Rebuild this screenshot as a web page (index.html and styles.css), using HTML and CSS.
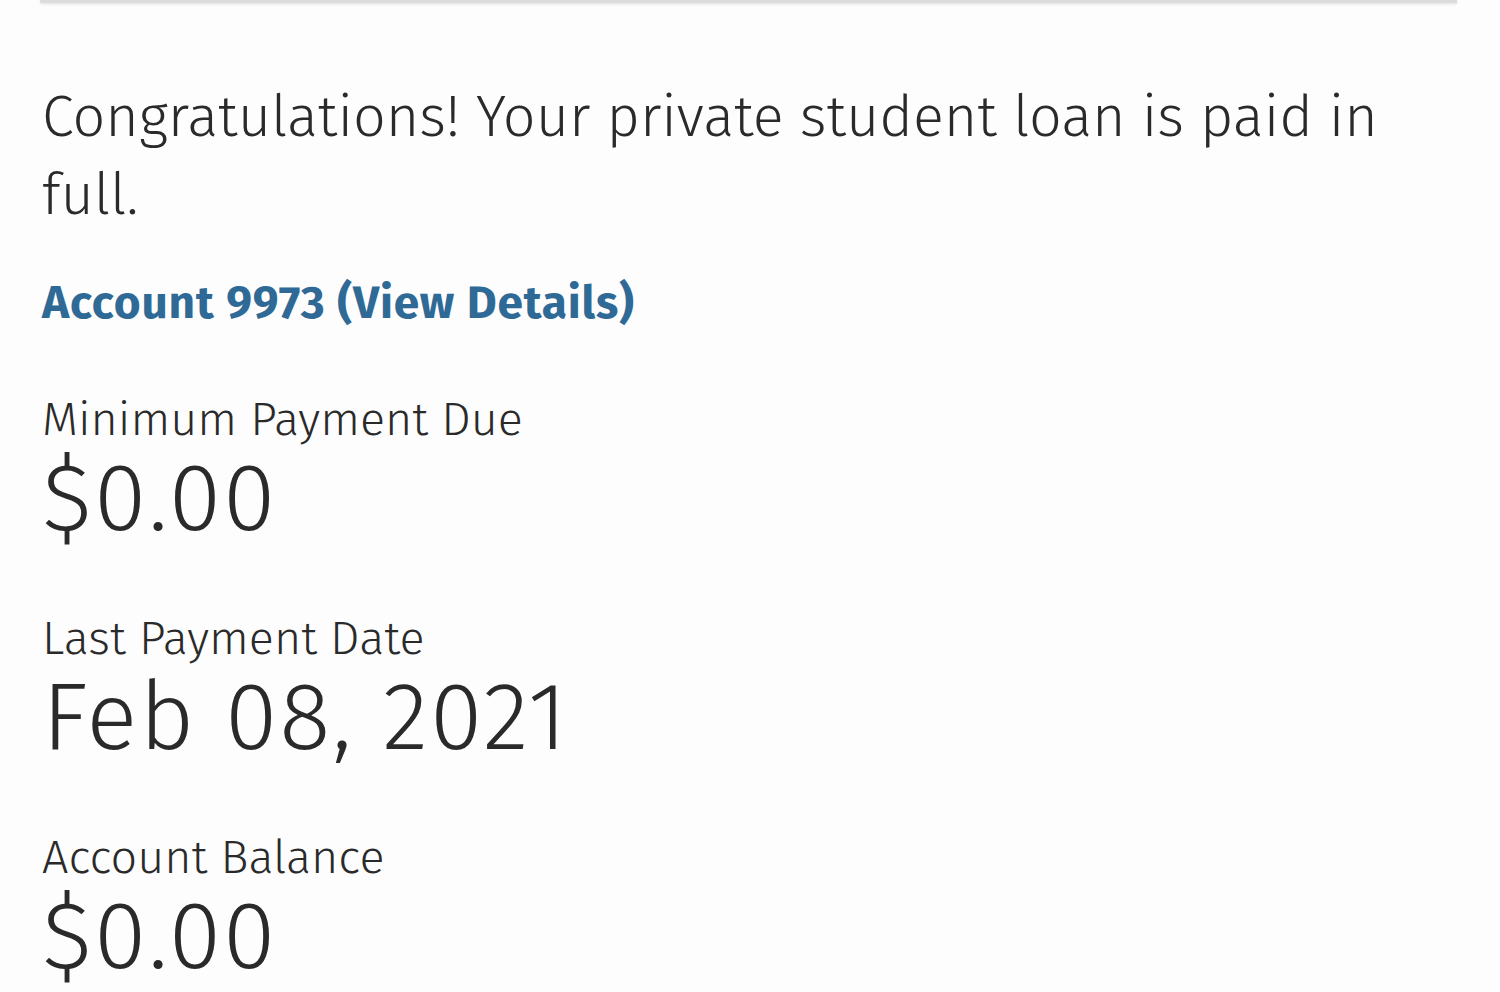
FILE: index.html
```html
<!DOCTYPE html>
<html lang="en">
<head>
    <meta charset="UTF-8">
    <meta name="viewport" content="width=device-width, initial-scale=1.0">
    <title>Loan Summary</title>
    <link rel="stylesheet" href="styles.css">
</head>
<body>

<!-- top edge of the card above -->
<div class="top-rule"></div>

<div class="summary">
    <p class="notice">Congratulations! Your private student loan is paid in full.</p>

    <a class="account-link" href="#">Account 9973 (View Details)</a>

    <div class="field">
        <div class="field-label">Minimum Payment Due</div>
        <div class="field-value">$0.00</div>
    </div>

    <div class="field">
        <div class="field-label">Last Payment Date</div>
        <div class="field-value">Feb 08, 2021</div>
    </div>

    <div class="field">
        <div class="field-label">Account Balance</div>
        <div class="field-value">$0.00</div>
    </div>
</div>

</body>
</html>
```

FILE: styles.css
```css
:root {
    --text: #2a2a2a;
    --link: #2f6a96;
    --rule: #dcdcdc;
}

body {
    margin: 0;
    background: #fdfdfd;
    color: var(--text);
    font-family: 'Fira Sans', 'Open Sans', 'Liberation Sans', sans-serif;
    font-weight: 300;
    overflow: hidden;
}

.top-rule {
    height: 3px;
    margin: 0 43px 0 40px;
    background: var(--rule);
    box-shadow: 0 1px 3px rgba(0,0,0,0.12);
}

.summary {
    padding: 0 42px;
}

.notice {
    font-size: 57.5px;
    line-height: 78px;
    margin: 75px 0 0;
}

.account-link {
    display: block;
    margin-top: 41px;
    font-size: 46px;
    font-weight: 700;
    line-height: 56px;
    letter-spacing: 0.8px;
    color: var(--link);
    text-decoration: none;
}

.field {
    margin-top: 60px;
}

.field-label {
    font-size: 46.7px;
    line-height: 56px;
}

.field-value {
    font-size: 95px;
    line-height: 104px;
    letter-spacing: 2px;
    margin-top: -1px;
}
```
